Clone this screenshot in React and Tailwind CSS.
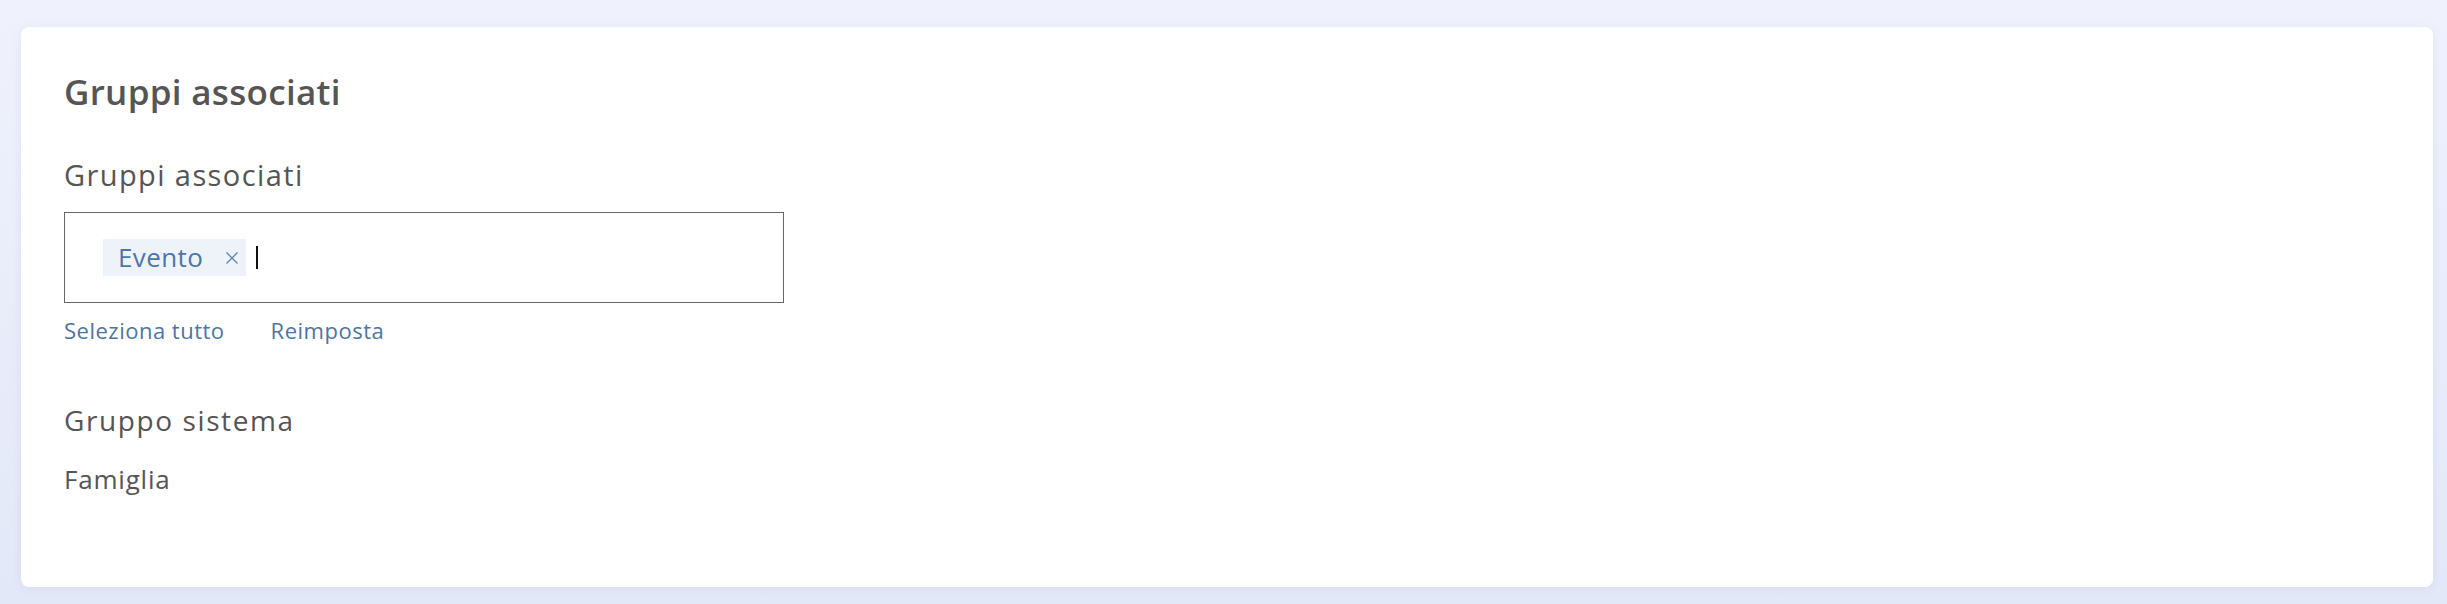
export default function App() {
  return (
    <div className="min-h-screen w-full bg-gradient-to-b from-[#eff2fc] to-[#e3e8f8] pt-[27px] pl-[21px] pr-[14px] pb-[17px]" style={{ fontFamily: "'Open Sans', Lato, sans-serif" }}>
      <div className="h-[560px] rounded-[8px] bg-white px-[43px] pt-[43px] shadow-[0_2px_10px_rgba(120,135,190,0.12)]">
        <h2 className="text-[35px] font-semibold leading-[44px] tracking-[0.3px] text-[#555555]">Gruppi associati</h2>

        <div className="mt-[43px]">
          <label className="block text-[29px] leading-[36px] tracking-[1.4px] text-[#555555]">Gruppi associati</label>
          <div className="mt-[19px] flex h-[91px] w-[720px] items-center border-[1.5px] border-[#666666] pl-[38px]">
            <span className="flex h-[37px] items-center gap-[22px] bg-[#eef3fa] pl-[15px] pr-[7px] text-[26px] tracking-[0.4px] text-[#4c76a8]">
              Evento
              <svg width="14" height="14" viewBox="0 0 14 14" className="text-[#5b7fb0]">
                <path d="M1.5 1.5 L12.5 12.5 M12.5 1.5 L1.5 12.5" stroke="currentColor" strokeWidth="1.3" fill="none" />
              </svg>
            </span>
            <span className="ml-[10px] h-[23px] w-[2px] bg-[#111111]" />
          </div>
          <div className="mt-[13px] flex gap-[46px] text-[22px] leading-[28px] tracking-[0.5px] text-[#4f74a3]">
            <a>Seleziona tutto</a>
            <a>Reimposta</a>
          </div>
        </div>

        <div className="mt-[58px]">
          <h3 className="text-[28px] font-medium leading-[36px] tracking-[1.6px] text-[#555555]">Gruppo sistema</h3>
          <p className="mt-[24px] text-[26px] leading-[34px] tracking-[0.8px] text-[#555555]">Famiglia</p>
        </div>
      </div>
    </div>
  );
}
